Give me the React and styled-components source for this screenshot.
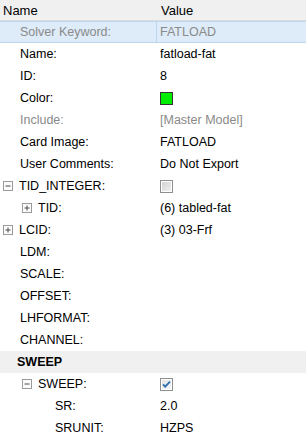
import React from "react";
import styled, { createGlobalStyle } from "styled-components";

const GlobalStyle = createGlobalStyle`
  html, body {
    margin: 0;
    padding: 0;
    background: #ffffff;
  }
  body {
    font-family: "Liberation Sans", Arial, sans-serif;
  }
`;

const rows = [
  { kind: "row", label: "Solver Keyword:", value: "FATLOAD", indent: 20, muted: true, selected: true },
  { kind: "row", label: "Name:", value: "fatload-fat", indent: 20 },
  { kind: "row", label: "ID:", value: "8", indent: 20 },
  { kind: "row", label: "Color:", swatch: "#00ee00", indent: 20 },
  { kind: "row", label: "Include:", value: "[Master Model]", indent: 20, muted: true },
  { kind: "row", label: "Card Image:", value: "FATLOAD", indent: 20 },
  { kind: "row", label: "User Comments:", value: "Do Not Export", indent: 20 },
  { kind: "row", label: "TID_INTEGER:", check: false, indent: 3, toggle: "minus" },
  { kind: "row", label: "TID:", value: "(6) tabled-fat", indent: 22, toggle: "plus" },
  { kind: "row", label: "LCID:", value: "(3) 03-Frf", indent: 3, toggle: "plus" },
  { kind: "row", label: "LDM:", indent: 20 },
  { kind: "row", label: "SCALE:", indent: 20 },
  { kind: "row", label: "OFFSET:", indent: 20 },
  { kind: "row", label: "LHFORMAT:", indent: 20 },
  { kind: "row", label: "CHANNEL:", indent: 20 },
  { kind: "section", label: "SWEEP" },
  { kind: "row", label: "SWEEP:", check: true, indent: 22, toggle: "minus" },
  { kind: "row", label: "SR:", value: "2.0", indent: 55 },
  { kind: "row", label: "SRUNIT:", value: "HZPS", indent: 55 },
];

const Expander = ({ type }) => (
  <svg width="10" height="10" viewBox="0 0 10 10">
    <rect x="0.5" y="0.5" width="9" height="9" fill="#fbfbfb" stroke="#9a9a9a" />
    <line x1="2.5" y1="5" x2="7.5" y2="5" stroke="#4a4a4a" strokeWidth="1" />
    {type === "plus" && <line x1="5" y1="2.5" x2="5" y2="7.5" stroke="#4a4a4a" strokeWidth="1" />}
  </svg>
);

const CheckBox = ({ checked }) => (
  <svg width="13" height="13" viewBox="0 0 13 13">
    <defs>
      <linearGradient id={checked ? "cbOn" : "cbOff"} x1="0" y1="0" x2="1" y2="1">
        <stop offset="0" stopColor={checked ? "#e4e4e4" : "#d2d2d2"} />
        <stop offset="1" stopColor={checked ? "#f4f4f4" : "#f0f0f0"} />
      </linearGradient>
    </defs>
    <rect x="0.5" y="0.5" width="12" height="12" fill="#ffffff" stroke="#8e8f8f" />
    <rect x="2" y="2" width="9" height="9" fill={`url(#${checked ? "cbOn" : "cbOff"})`} />
    {checked && (
      <path d="M3 6.3 L5.2 8.6 L10 3.6" fill="none" stroke="#2a6fb0" strokeWidth="1.8" />
    )}
  </svg>
);

const App = () => (
  <>
    <GlobalStyle />
    <Grid>
      <Header>
        <HeadCell>Name</HeadCell>
        <HeadCell>Value</HeadCell>
      </Header>
      {rows.map((r, i) =>
        r.kind === "section" ? (
          <Section key={i}>{r.label}</Section>
        ) : (
          <Row key={i} $selected={r.selected}>
            <NameCell $indent={r.indent} $muted={r.muted} $selected={r.selected}>
              {r.toggle && (
                <Toggle>
                  <Expander type={r.toggle} />
                </Toggle>
              )}
              {r.label}
            </NameCell>
            <ValueCell $muted={r.muted}>
              {r.value}
              {r.swatch && <Swatch color={r.swatch} />}
              {r.check !== undefined && <CheckBox checked={r.check} />}
            </ValueCell>
          </Row>
        )
      )}
    </Grid>
  </>
);

const Grid = styled.div`
  width: 306px;
  display: flex;
  flex-direction: column;
`;

const Header = styled.div`
  display: grid;
  grid-template-columns: 157px 1fr;
  height: 21px;
  background: #f0f0f0;
  border-bottom: 1px solid #dcdcdc;
  box-sizing: border-box;
`;

const HeadCell = styled.div`
  display: flex;
  align-items: center;
  padding-left: 3px;
  font-size: 13px;
  color: #000000;
  &:last-child {
    padding-left: 4px;
  }
`;

const Row = styled.div`
  display: grid;
  grid-template-columns: 157px 1fr;
  height: 22px;
  box-sizing: border-box;
  background: ${(p) => (p.$selected ? "#deebf8" : "#ffffff")};
  border-top: 1px solid ${(p) => (p.$selected ? "#bcd6f2" : "transparent")};
  border-bottom: 1px solid ${(p) => (p.$selected ? "#bcd6f2" : "transparent")};
`;

const NameCell = styled.div`
  display: flex;
  align-items: center;
  padding-left: ${(p) => p.$indent}px;
  font-size: 12.5px;
  color: ${(p) => (p.$muted ? "#8a8a8a" : "#000000")};
  white-space: nowrap;
  border-right: 1px solid ${(p) => (p.$selected ? "#bcd6f2" : "transparent")};
`;

const Toggle = styled.span`
  display: inline-flex;
  margin-right: 6px;
`;

const ValueCell = styled.div`
  display: flex;
  align-items: center;
  padding-left: 3px;
  font-size: 12.5px;
  color: ${(p) => (p.$muted ? "#8a8a8a" : "#000000")};
  white-space: nowrap;
`;

const Swatch = styled.span`
  width: 11px;
  height: 11px;
  background: ${(p) => p.color};
  border: 1px solid #333333;
`;

const Section = styled.div`
  height: 22px;
  display: flex;
  align-items: center;
  padding-left: 17px;
  background: #f0f0f0;
  font-size: 12.5px;
  font-weight: bold;
  color: #000000;
`;

export default App;
